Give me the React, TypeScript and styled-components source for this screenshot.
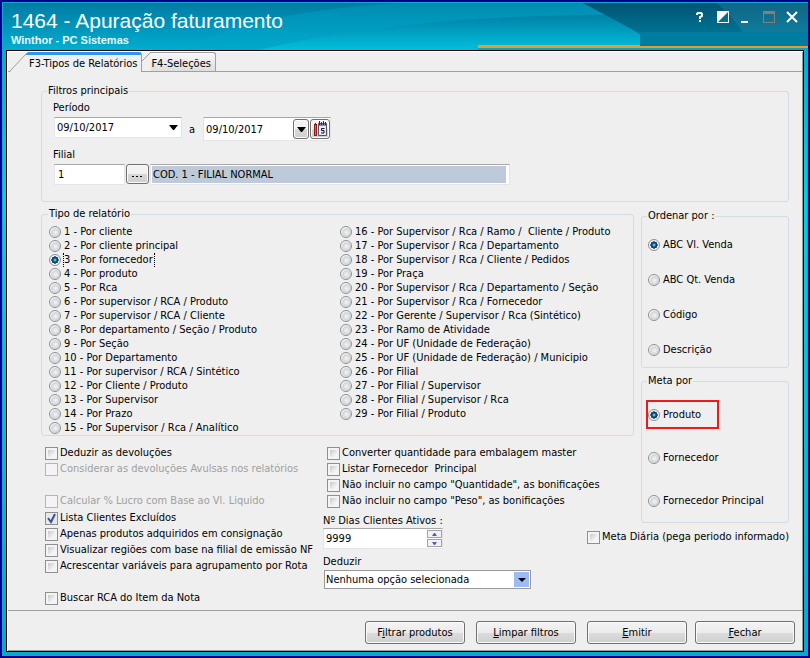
import React, { useState } from 'react';
import styled, { createGlobalStyle, css } from 'styled-components';

const GlobalStyle = createGlobalStyle`
  *, *::before, *::after { box-sizing: border-box; }
  body { margin: 0; background: #00008b; }
  body, input, button, select {
    font-family: 'DejaVu Sans Condensed', 'DejaVu Sans', sans-serif;
    font-size: 11px;
    line-height: 14px;
    color: #000;
  }
`;

const Window = styled.div`
  position: relative;
  display: flex;
  flex-direction: column;
  min-height: 100vh;
  border: 2px solid #00008b;
  padding: 0 4px 4px;
  background: linear-gradient(#00a5c4, #00d2e2 30%, #06a9cb);
  box-shadow: inset 0 0 0 1px #14a6c6;
`;

const HeaderArt = styled.svg`
  position: absolute;
  top: 1px;
  left: 1px;
  width: calc(100% - 1px);
  height: 47px;
`;

const Header = styled.header`
  position: relative;
  display: flex;
  justify-content: space-between;
  height: 48px;
  padding: 7px 3px 0 5px;
  color: #fff;
  font-family: 'Liberation Sans', sans-serif;
`;

const Title = styled.h1`
  margin: 0;
  font-size: 21px;
  line-height: 24px;
  font-weight: 400;
`;

const Subtitle = styled.p`
  margin: 0;
  font-size: 11px;
  line-height: 14px;
  font-weight: 700;
  color: #e6f8fb;
`;

const WindowButtons = styled.div`
  display: flex;
  gap: 5px;
  height: 16px;
`;

const WindowButton = styled.button`
  display: flex;
  align-items: center;
  justify-content: center;
  width: 18px;
  height: 16px;
  padding: 0;
  border: 0;
  background: none;
`;

const Client = styled.main`
  flex: 1;
  display: flex;
  flex-direction: column;
  border: 1px solid #000;
  background: #efefef;
  box-shadow: inset 1px 1px #fff, inset -1px -1px #9a9a9a;
`;

const Tabs = styled.div`
  display: flex;
  align-items: flex-end;
  height: 21px;
  margin: 0 1px;
  padding-left: 2px;
  background: linear-gradient(#a0a09c, #a0a09c) bottom / 100% 1px no-repeat;
`;

const Tab = styled.button<{ $active?: boolean }>`
  display: flex;
  height: ${p => (p.$active ? 20 : 19)}px;
  margin-bottom: ${p => (p.$active ? 0 : 1)}px;
  padding: 0;
  border: 0;
  background: none;
  white-space: nowrap;
`;

const TabBody = styled.span<{ $active?: boolean }>`
  height: 100%;
  padding: ${p => (p.$active ? '2px 4px 0 1px' : '4px 4px 0 0')};
  border-top: ${p => (p.$active ? '3px solid #3393f5' : '1px solid #a0a09c')};
  border-right: 1px solid #a0a09c;
  border-radius: 0 3px 0 0;
  background: ${p => (p.$active ? '#efefef' : 'linear-gradient(#f8f8f8, #dedede)')};
`;

const Page = styled.div`
  flex: 1;
  display: flex;
  flex-direction: column;
  gap: 5px;
  padding: 12px 14px 4px 34px;
`;

const Group = styled.fieldset<{ $pad: string }>`
  min-width: 0;
  margin: 0;
  padding: ${p => p.$pad};
  border: 1px solid #d0dce6;
  border-radius: 3px;
`;

const Legend = styled.legend`
  margin-left: -1px;
  padding: 0 1px;
  line-height: 14px;
`;

const FilterBody = styled.div`
  padding-left: 5px;
`;

const FieldRow = styled.div<{ $last?: boolean }>`
  display: flex;
  align-items: flex-start;
  margin: ${p => (p.$last ? '2px 0 0' : '2px 0 7px')};
  padding-left: 1px;
`;

const FieldLabel = styled.label`
  display: block;
  width: fit-content;
  line-height: 14px;
`;

const sunken = css`
  border: 1px solid #e3e3e8;
  border-top-color: #a8a8ac;
  background: #fff;
`;

const DateBox = styled.div<{ $tall?: boolean }>`
  ${sunken}
  display: flex;
  align-items: center;
  gap: 1px;
  width: 128px;
  height: ${p => (p.$tall ? 24 : 21)}px;
`;

const PlainInput = styled.input`
  flex: 1;
  min-width: 0;
  height: 16px;
  padding: 0 2px;
  border: 0;
  background: none;
  outline: 0;
`;

const ArrowButton = styled.button`
  display: flex;
  align-items: center;
  justify-content: center;
  width: 16px;
  height: 18px;
  padding: 0;
  border: 0;
  background: none;
`;

const SmallButton = styled.button<{ $w: number }>`
  display: flex;
  align-items: center;
  justify-content: center;
  flex: none;
  width: ${p => p.$w}px;
  height: 20px;
  padding: 0;
  border: 1px solid #707070;
  border-radius: 3px;
  background: linear-gradient(#f2f2f2 50%, #d8d8d8 50%, #cfcfcf);
  box-shadow: inset 0 0 0 1px #fafafa;
`;

const Separator = styled.span`
  padding: 6px 8px 0 7px;
`;

const BranchCode = styled.input`
  ${sunken}
  width: 71px;
  height: 21px;
  margin-right: 1px;
  padding: 0 3px;
`;

const BranchName = styled.div`
  ${sunken}
  display: flex;
  flex: 0 1 360px;
  height: 21px;
  margin-left: 1px;
  padding: 1px 3px 1px 1px;
`;

const BranchNameInput = styled.input`
  flex: 1;
  min-width: 0;
  padding: 0 1px;
  border: 0;
  background: #bccad9;
`;

const Columns = styled.div`
  display: flex;
  align-items: flex-start;
  gap: 7px;
`;

const MainColumn = styled.div`
  flex: 1;
  min-width: 0;
`;

const SideColumn = styled.div`
  display: flex;
  flex-direction: column;
  flex: none;
  width: 148px;
  gap: 6px;
  padding-top: 2px;
`;

const ReportGrid = styled.div`
  display: grid;
  grid-template-columns: 291px 1fr;
`;

const RadioStack = styled.div<{ $gap?: number }>`
  display: flex;
  flex-direction: column;
  gap: ${p => p.$gap ?? 0}px;
`;

const Choice = styled.label<{ $h: number; $mark?: boolean; $off?: boolean }>`
  display: flex;
  align-items: center;
  width: fit-content;
  height: ${p => p.$h}px;
  white-space: pre;
  color: ${p => (p.$off ? '#a0a0a0' : '#000')};
  ${p => p.$mark && css`
    padding-right: 14px;
    outline: 2px solid #f01818;
  `}
`;

const Radio = styled.input.attrs({ type: 'radio' })`
  appearance: none;
  flex: none;
  width: 12px;
  height: 12px;
  margin: 0 3px 0 0;
  border: 1px solid #8e8f8f;
  border-radius: 50%;
  background: radial-gradient(circle at 55% 55%, #eef0f2 10%, #cfd3d8 50%, #f4f4f4 60%);
  &:checked {
    background: radial-gradient(circle at 50% 50%, #6cc6ee 8%, #155f94 24%, #0c2f50 48%, #f0f4f6 54%);
  }
`;

const ChoiceText = styled.span<{ $focus?: boolean }>`
  margin-left: -1px;
  padding-right: 1px;
  border: dotted ${p => (p.$focus ? '#000' : 'transparent')};
  border-width: 0 1px;
`;

const Check = styled.input.attrs({ type: 'checkbox' })`
  appearance: none;
  flex: none;
  width: 13px;
  height: 13px;
  margin: 0 2px 0 0;
  padding: 2px;
  border: 1px solid #8e8f8f;
  background: linear-gradient(135deg, #c6cacf, #f6f6f6 80%) content-box, #f4f4f4;
  &:disabled { border-color: #b5b5b5; background: #f4f4f4; }
  &:checked {
    background: url("data:image/svg+xml,%3Csvg xmlns='http://www.w3.org/2000/svg' width='11' height='11'%3E%3Cpath d='M2 5l3 4L9 1' fill='none' stroke='%233d5292' stroke-width='2'/%3E%3C/svg%3E") center no-repeat padding-box, #e6e8ec;
  }
`;

const Options = styled.div`
  display: grid;
  grid-template-columns: 282px 1fr;
  padding: 9px 0 0 4px;
`;

const Spacer = styled.div<{ $h: number }>`
  height: ${p => p.$h}px;
`;

const Fields = styled.div`
  display: flex;
  flex-direction: column;
  align-items: flex-start;
  margin: 5px 0 0 -4px;
`;

const SpinBox = styled.div`
  ${sunken}
  display: flex;
  align-items: center;
  width: 120px;
  height: 21px;
  margin-bottom: 6px;
`;

const SpinButtons = styled.div`
  display: flex;
  flex-direction: column;
  gap: 1px;
`;

const SpinButton = styled.button`
  display: flex;
  align-items: center;
  justify-content: center;
  width: 15px;
  height: 8px;
  padding: 0;
  border: 1px solid #a4a4a8;
  background: #f2f2f4;
`;

const Select = styled.select`
  appearance: none;
  width: 207px;
  height: 19px;
  margin: 1px 0 0 1px;
  padding: 0 18px 0 1px;
  border: 1px solid #9a9a9a;
  border-radius: 0;
  background:
    url("data:image/svg+xml,%3Csvg xmlns='http://www.w3.org/2000/svg' width='15' height='15'%3E%3Cpath fill='%239dbcf3' d='M0 0h15v15H0z'/%3E%3Cpath d='M4 6h8l-4 4z'/%3E%3C/svg%3E") right 1px center no-repeat,
    #fff;
`;

const DailyGoal = styled.div`
  align-self: flex-end;
`;

const Footer = styled.footer`
  display: flex;
  justify-content: flex-end;
  gap: 8px;
  margin: 0 1px;
  padding: 10px 7px 7px;
  border-top: 1px solid #a0a09c;
`;

const FooterGroup = styled.div`
  display: flex;
  gap: 11px;
`;

const ActionButton = styled.button`
  width: 100px;
  height: 23px;
  padding: 0;
  border: 1px solid #707070;
  border-radius: 3px;
  background: linear-gradient(#f4f4f4, #ebebeb 50%, #dcdcdc 50%, #cfcfcf);
  box-shadow: inset 0 0 0 1px #fafafa;
`;

const reports = [
  '1 - Por cliente', '2 - Por cliente principal', '3 - Por fornecedor', '4 - Por produto', '5 - Por Rca',
  '6 - Por supervisor / RCA / Produto', '7 - Por supervisor / RCA / Cliente',
  '8 - Por departamento / Seção / Produto', '9 - Por Seção', '10 - Por Departamento',
  '11 - Por supervisor / RCA / Sintético', '12 - Por Cliente / Produto', '13 - Por Supervisor',
  '14 - Por Prazo', '15 - Por Supervisor / Rca / Analítico',
  '16 - Por Supervisor / Rca / Ramo /  Cliente / Produto', '17 - Por Supervisor / Rca / Departamento',
  '18 - Por Supervisor / Rca / Cliente / Pedidos', '19 - Por Praça',
  '20 - Por Supervisor / Rca / Departamento / Seção', '21 - Por Supervisor / Rca / Fornecedor',
  '22 - Por Gerente / Supervisor / Rca (Sintético)', '23 - Por Ramo de Atividade',
  '24 - Por UF (Unidade de Federação)', '25 - Por UF (Unidade de Federação) / Municipio',
  '26 - Por Filial', '27 - Por Filial / Supervisor', '28 - Por Filial / Supervisor / Rca',
  '29 - Por Filial / Produto',
];

type RadioListProps = {
  name: string;
  items: string[];
  value: string;
  onChange: (v: string) => void;
  height: number;
  gap?: number;
  mark?: string;
  focus?: boolean;
};

function RadioList({ name, items, value, onChange, height, gap, mark, focus }: RadioListProps) {
  return (
    <RadioStack $gap={gap}>
      {items.map(item => (
        <Choice key={item} $h={height} $mark={item === mark}>
          <Radio name={name} checked={item === value} onChange={() => onChange(item)} />
          <ChoiceText $focus={focus && item === value}>{item}</ChoiceText>
        </Choice>
      ))}
    </RadioStack>
  );
}

function CheckOption({ text, on, off }: { text: string; on?: boolean; off?: boolean }) {
  return (
    <Choice $h={16} $off={off}>
      <Check defaultChecked={on} disabled={off} />
      <span>{text}</span>
    </Choice>
  );
}

const Arrow = () => (
  <svg width="9" height="5" viewBox="0 0 9 5"><path d="M0 0h9L5 5H4z" /></svg>
);

const CalendarIcon = () => (
  <svg width="15" height="16" viewBox="0 0 15 16">
    <path fill="#8c1c14" d="M1 3h3v12H1z" />
    <path fill="#d8604c" d="M2 4h1v10H2z" />
    <path fill="#e9e9ee" stroke="#50506a" d="M5.500 2.500h8v12h-8z" />
    <path fill="#8a8a98" d="M6 3h7v2H6z" />
    <path fill="none" stroke="#30303c" d="M6.500 0v4M8.500 1v3M10.500 0v4M12.500 1v3M2.500 2v2" />
    <path fill="none" stroke="#10103c" d="M11.500 7.500h-3v2h2.500v2.500H8" />
  </svg>
);

export default function App() {
  const [report, setReport] = useState('3 - Por fornecedor');
  const [order, setOrder] = useState('ABC Vl. Venda');
  const [goal, setGoal] = useState('Produto');

  return (
    <>
      <GlobalStyle />
      <Window>
        <HeaderArt viewBox="0 0 805 47" preserveAspectRatio="none" aria-hidden="true">
          <defs>
            <linearGradient id="sky" x2="0" y2="1">
              <stop stopColor="#007ba3" /><stop offset="1" stopColor="#00aed0" />
            </linearGradient>
            <linearGradient id="wave" x2="0" y2="1">
              <stop stopColor="#0080a6" /><stop offset="1" stopColor="#00c0dc" />
            </linearGradient>
            <linearGradient id="deep" x2="0" y2="1">
              <stop stopColor="#005472" /><stop offset="1" stopColor="#0084a6" />
            </linearGradient>
          </defs>
          <path fill="url(#sky)" d="M0 0h805v47H0z" />
          <path fill="#00a4c8" fillOpacity=".4" d="M180 47Q250 8 400 0H805V47z" />
          <path fill="url(#wave)" d="M255 47C400 14 520 8 805 13V47z" />
          <path fill="url(#deep)" d="M580 0H805V47H660L632 28z" />
          <path fill="#3a9dba" fillOpacity=".25" d="M713 0Q728 11 740 30H805V0z" />
          <path fill="#007ca0" d="M637 29h168v14H637z" />
          <path fill="#00a8c4" d="M475 45h330v2H475z" />
          <path fill="#f09a1e" d="M475 42h162v1h168v2H475z" />
        </HeaderArt>
        <Header>
          <div>
            <Title>1464 - Apuração faturamento</Title>
            <Subtitle>Winthor - PC Sistemas</Subtitle>
          </div>
          <WindowButtons>
            <WindowButton aria-label="Ajuda">
              <svg width="10" height="12" viewBox="0 0 10 12">
                <path d="M2 4V3l1-1h3l1 1v2L5 6v2" fill="none" stroke="#fff" strokeWidth="2" />
                <path fill="#fff" d="M4 9h2v2H4z" />
              </svg>
            </WindowButton>
            <WindowButton aria-label="Encolher">
              <svg width="12" height="12" viewBox="0 0 12 12">
                <path fill="#fff" d="M0 0h12v12H0z" /><path fill="#00708f" d="M11 1v10H1z" />
              </svg>
            </WindowButton>
            <WindowButton aria-label="Minimizar">
              <svg width="12" height="12" viewBox="0 0 12 12"><path fill="#fff" d="M1 10h7v2H1z" /></svg>
            </WindowButton>
            <WindowButton aria-label="Maximizar" disabled>
              <svg width="12" height="12" viewBox="0 0 12 12">
                <path fill="#808080" fillRule="evenodd" d="M0 0h12v12H0zM1 3v8h10V3z" />
              </svg>
            </WindowButton>
            <WindowButton aria-label="Fechar janela">
              <svg width="12" height="12" viewBox="0 0 12 12"><path d="M1 1l10 10M11 1L1 11" stroke="#fff" strokeWidth="2" /></svg>
            </WindowButton>
          </WindowButtons>
        </Header>
        <Client>
          <Tabs role="tablist">
            <Tab $active role="tab" aria-selected="true">
              <svg width="18" height="20" viewBox="0 0 18 20">
                <path fill="#efefef" d="M0 20L18 1v19z" />
                <path fill="#3393f5" d="M18 0v3h-3z" />
                <path fill="none" stroke="#a0a09c" d="M0 19L17 1" />
              </svg>
              <TabBody $active>F3-Tipos de Relatórios</TabBody>
            </Tab>
            <Tab role="tab" aria-selected="false">
              <svg width="9" height="19" viewBox="0 0 9 19">
                <path fill="#efefef" d="M0 9L9 0v19H0z" />
                <path fill="none" stroke="#a0a09c" d="M0 9L9 0" />
              </svg>
              <TabBody>F4-Seleções</TabBody>
            </Tab>
          </Tabs>
          <Page>
            <Group $pad="3px 6px 16px">
              <Legend>Filtros principais</Legend>
              <FilterBody>
                <FieldLabel htmlFor="start">Período</FieldLabel>
                <FieldRow>
                  <DateBox>
                    <PlainInput id="start" defaultValue="09/10/2017" />
                    <ArrowButton aria-label="Abrir data inicial"><Arrow /></ArrowButton>
                  </DateBox>
                  <Separator>a</Separator>
                  <DateBox $tall>
                    <PlainInput aria-label="Data final" defaultValue="09/10/2017" />
                    <SmallButton $w={16} aria-label="Abrir data final"><Arrow /></SmallButton>
                    <SmallButton $w={20} aria-label="Calendário"><CalendarIcon /></SmallButton>
                  </DateBox>
                </FieldRow>
                <FieldLabel htmlFor="branch">Filial</FieldLabel>
                <FieldRow $last>
                  <BranchCode id="branch" defaultValue="1" />
                  <SmallButton $w={23} aria-label="Procurar filial">
                    <svg width="11" height="8" viewBox="0 0 11 8"><path d="M0 6h2v1H0zM4 6h2v1H4zM8 6h2v1H8z" /></svg>
                  </SmallButton>
                  <BranchName>
                    <BranchNameInput aria-label="Nome da filial" readOnly value="COD. 1 - FILIAL NORMAL" />
                  </BranchName>
                </FieldRow>
              </FilterBody>
            </Group>
            <Columns>
              <MainColumn>
                <Group $pad="4px 7px 0">
                  <Legend>Tipo de relatório</Legend>
                  <ReportGrid>
                    <RadioList focus name="report" items={reports.slice(0, 15)} value={report} onChange={setReport} height={14} />
                    <RadioList name="report" items={reports.slice(15)} value={report} onChange={setReport} height={14} />
                  </ReportGrid>
                </Group>
                <Options>
                  <div>
                    <CheckOption text="Deduzir as devoluções" />
                    <CheckOption off text="Considerar as devoluções Avulsas nos relatórios" />
                    <Spacer $h={16} />
                    <CheckOption off text="Calcular % Lucro com Base ao Vl. Liquido" />
                    <Spacer $h={1} />
                    <CheckOption on text="Lista Clientes Excluídos" />
                    <CheckOption text="Apenas produtos adquiridos em consignação" />
                    <CheckOption text="Visualizar regiões com base na filial de emissão NF" />
                    <CheckOption text="Acrescentar variáveis para agrupamento por Rota" />
                    <Spacer $h={16} />
                    <CheckOption text="Buscar RCA do Item da Nota" />
                  </div>
                  <div>
                    <CheckOption text="Converter quantidade para embalagem master" />
                    <CheckOption text="Listar Fornecedor  Principal" />
                    <CheckOption text={'Não incluir no campo "Quantidade", as bonificações'} />
                    <CheckOption text={'Não incluir no campo "Peso", as bonificações'} />
                    <Fields>
                      <FieldLabel htmlFor="days">Nº Dias Clientes Ativos :</FieldLabel>
                      <SpinBox>
                        <PlainInput id="days" defaultValue="9999" />
                        <SpinButtons>
                          <SpinButton aria-label="Aumentar">
                            <svg width="5" height="3" viewBox="0 0 5 3"><path fill="#4a62b0" d="M0 3h5L3 0H2z" /></svg>
                          </SpinButton>
                          <SpinButton aria-label="Diminuir">
                            <svg width="5" height="3" viewBox="0 0 5 3"><path fill="#4a62b0" d="M0 0h5L3 3H2z" /></svg>
                          </SpinButton>
                        </SpinButtons>
                      </SpinBox>
                      <FieldLabel htmlFor="deduct">Deduzir</FieldLabel>
                      <Select id="deduct"><option>Nenhuma opção selecionada</option></Select>
                    </Fields>
                  </div>
                </Options>
              </MainColumn>
              <SideColumn>
                <Group $pad="4px 6px 0">
                  <Legend>Ordenar por :</Legend>
                  <RadioList name="order" items={['ABC Vl. Venda', 'ABC Qt. Venda', 'Código', 'Descrição']} value={order} onChange={setOrder} height={35} />
                </Group>
                <Group $pad="14px 6px 9px">
                  <Legend>Meta por</Legend>
                  <RadioList name="goal" items={['Produto', 'Fornecedor', 'Fornecedor Principal']} value={goal} onChange={setGoal} height={25} gap={18} mark="Produto" />
                </Group>
                <DailyGoal><CheckOption text="Meta Diária (pega periodo informado)" /></DailyGoal>
              </SideColumn>
            </Columns>
          </Page>
          <Footer>
            <FooterGroup>
              <ActionButton>F<u>i</u>ltrar produtos</ActionButton>
              <ActionButton><u>L</u>impar filtros</ActionButton>
              <ActionButton><u>E</u>mitir</ActionButton>
            </FooterGroup>
            <ActionButton><u>F</u>echar</ActionButton>
          </Footer>
        </Client>
      </Window>
    </>
  );
}
